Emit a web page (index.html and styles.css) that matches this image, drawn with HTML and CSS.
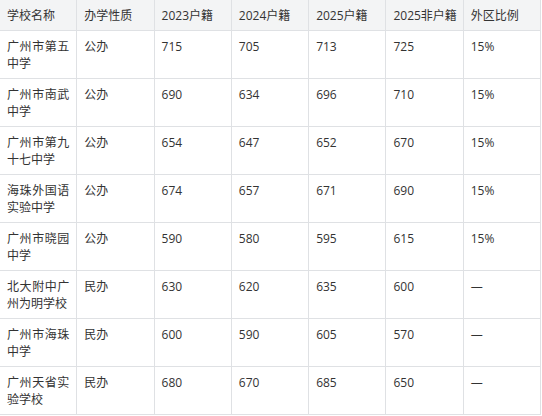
FILE: index.html
```html
<!DOCTYPE html>
<html lang="zh-CN">
<head>
<meta charset="utf-8">
<title>学校录取分数</title>
<link rel="stylesheet" href="styles.css">
</head>
<body>
<table class="score-table">
  <thead>
    <tr>
      <th>学校名称</th>
      <th>办学性质</th>
      <th>2023户籍</th>
      <th>2024户籍</th>
      <th>2025户籍</th>
      <th>2025非户籍</th>
      <th>外区比例</th>
    </tr>
  </thead>
  <tbody>
    <tr><td>广州市第五中学</td><td>公办</td><td>715</td><td>705</td><td>713</td><td>725</td><td>15%</td></tr>
    <tr><td>广州市南武中学</td><td>公办</td><td>690</td><td>634</td><td>696</td><td>710</td><td>15%</td></tr>
    <tr><td>广州市第九十七中学</td><td>公办</td><td>654</td><td>647</td><td>652</td><td>670</td><td>15%</td></tr>
    <tr><td>海珠外国语实验中学</td><td>公办</td><td>674</td><td>657</td><td>671</td><td>690</td><td>15%</td></tr>
    <tr><td>广州市晓园中学</td><td>公办</td><td>590</td><td>580</td><td>595</td><td>615</td><td>15%</td></tr>
    <tr><td>北大附中广州为明学校</td><td>民办</td><td>630</td><td>620</td><td>635</td><td>600</td><td>—</td></tr>
    <tr><td>广州市海珠中学</td><td>民办</td><td>600</td><td>590</td><td>605</td><td>570</td><td>—</td></tr>
    <tr><td>广州天省实验学校</td><td>民办</td><td>680</td><td>670</td><td>685</td><td>650</td><td>—</td></tr>
  </tbody>
</table>
</body>
</html>
```

FILE: styles.css
```css
html, body {
  margin: 0;
  padding: 0;
  background: #ffffff;
}

body {
  font-family: "Open Sans", "Noto Sans CJK SC", sans-serif;
  font-size: 12px;
  color: #333333;
  overflow: hidden;
}

.score-table {
  border-collapse: collapse;
  table-layout: fixed;
  width: 542px;
  margin: -1px 0 0 -1px;
}

.score-table th,
.score-table td {
  border: 1px solid #dfe1e4;
  padding: 6.5px 7px;
  line-height: 17px;
  text-align: justify;
  vertical-align: top;
  font-weight: normal;
  word-break: break-all;
}

.score-table th {
  background: #f3f4f5;
  white-space: nowrap;
}
```
